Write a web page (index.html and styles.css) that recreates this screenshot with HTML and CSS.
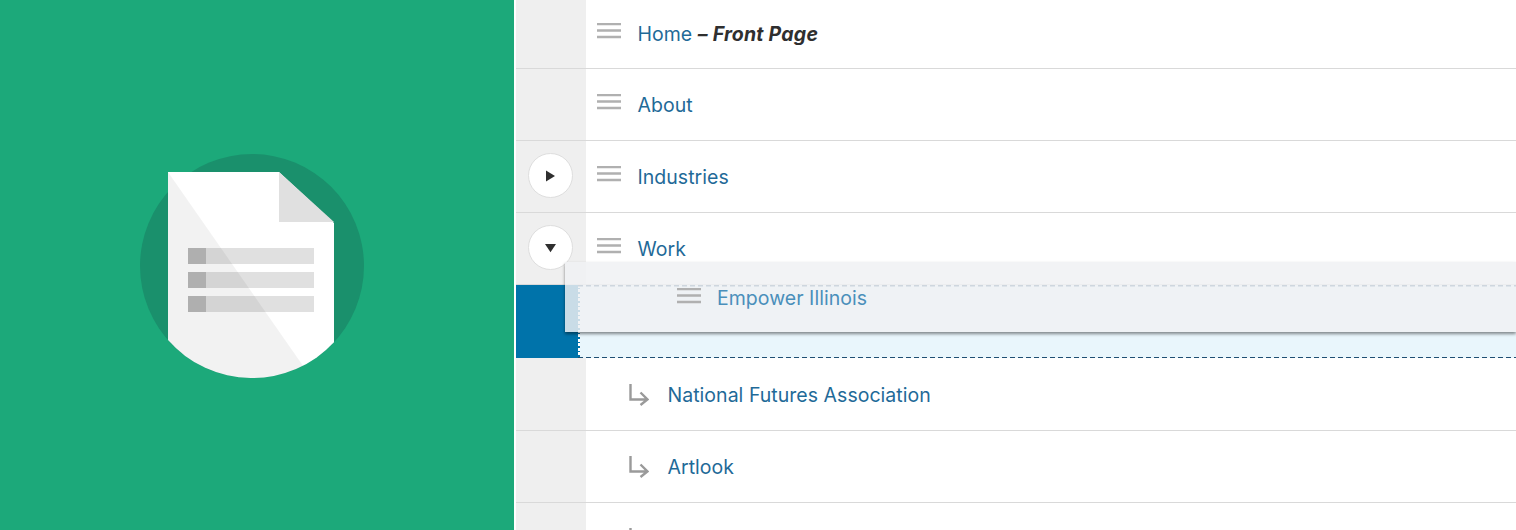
FILE: index.html
```html
<!DOCTYPE html>
<html lang="en">
<head>
<meta charset="utf-8">
<title>Pages</title>
<link rel="stylesheet" href="styles.css">
</head>
<body>
<div class="page">
  <aside class="hero">
    <svg class="hero-art" viewBox="0 0 514 530" aria-hidden="true">
      <circle cx="252" cy="266" r="112" fill="#1a906c"/>
      <path d="M168 172H279L334 223V342.300A112 112 0 0 1 168 340.100Z" fill="#fff"/>
      <path d="M279 172V222H334Z" fill="#e0e0e0"/>
      <path d="M188 248H314V264H188ZM188 272H314V288H188ZM188 296H314V312H188Z" fill="#e0e0e0"/>
      <path d="M188 248H206V264H188ZM188 272H206V288H188ZM188 296H206V312H188Z" fill="#b9b9b9"/>
      <path d="M168 172L303 365.700A112 112 0 0 1 168 340.100Z" fill="#000" fill-opacity=".05"/>
    </svg>
  </aside>
  <main class="list">
    <div class="row row-first">
      <div class="gutter"></div>
      <div class="cell">
        <svg class="handle" viewBox="0 0 24 16"><path d="M0 1H24M0 7.500H24M0 14H24"/></svg>
        <span class="title"><a class="link">Home</a> <em class="state">– Front Page</em></span>
      </div>
    </div>
    <div class="row">
      <div class="gutter"></div>
      <div class="cell">
        <svg class="handle" viewBox="0 0 24 16"><path d="M0 1H24M0 7.500H24M0 14H24"/></svg>
        <span class="title"><a class="link">About</a></span>
      </div>
    </div>
    <div class="row">
      <div class="gutter"><span class="toggle"><svg viewBox="0 0 10 12"><path d="M0.500 0.500L9.500 6L0.500 11.500Z"/></svg></span></div>
      <div class="cell">
        <svg class="handle" viewBox="0 0 24 16"><path d="M0 1H24M0 7.500H24M0 14H24"/></svg>
        <span class="title"><a class="link">Industries</a></span>
      </div>
    </div>
    <div class="row">
      <div class="gutter"><span class="toggle"><svg viewBox="0 0 12 10"><path d="M0 0.500H12L6 9.500Z"/></svg></span></div>
      <div class="cell">
        <svg class="handle" viewBox="0 0 24 16"><path d="M0 1H24M0 7.500H24M0 14H24"/></svg>
        <span class="title"><a class="link">Work</a></span>
      </div>
    </div>
    <div class="placeholder">
      <div class="placeholder-gutter"></div>
      <div class="placeholder-body"></div>
    </div>
    <div class="row row-child">
      <div class="gutter"></div>
      <div class="cell cell-child">
        <svg class="arrow" viewBox="0 0 20 22"><path d="M1.500 0V15.500H18M11.500 8.500L18.500 15.500L11.500 21"/></svg>
        <span class="title"><a class="link">National Futures Association</a></span>
      </div>
    </div>
    <div class="row">
      <div class="gutter"></div>
      <div class="cell cell-child">
        <svg class="arrow" viewBox="0 0 20 22"><path d="M1.500 0V15.500H18M11.500 8.500L18.500 15.500L11.500 21"/></svg>
        <span class="title"><a class="link">Artlook</a></span>
      </div>
    </div>
    <div class="row">
      <div class="gutter"></div>
      <div class="cell cell-child">
        <svg class="arrow" viewBox="0 0 20 22"><path d="M1.500 0V15.500H18M11.500 8.500L18.500 15.500L11.500 21"/></svg>
      </div>
    </div>
    <div class="drag-item">
      <svg class="handle handle-drag" viewBox="0 0 24 16"><path d="M0 1H24M0 7.500H24M0 14H24"/></svg>
      <span class="title title-drag">Empower Illinois</span>
    </div>
  </main>
</div>
</body>
</html>
```
FILE: styles.css
```css
* { box-sizing: border-box; }
html, body { margin: 0; height: 100%; overflow: hidden; background: #fff; }
body { font-family: Inter, "Liberation Sans", sans-serif; }

.page { display: flex; width: 1516px; height: 530px; overflow: hidden; }

.hero { flex: 0 0 514px; height: 530px; background: #1ca97a; }
.hero-art { display: block; width: 514px; height: 530px; }

.list { position: relative; flex: 1; margin-left: 2px; overflow: hidden; }

.row { display: flex; height: 72px; border-bottom: 1px solid #d9d9d9; }
.row-first { height: 69px; }
.row-child { height: 73px; }

.gutter { flex: 0 0 70px; display: flex; align-items: center; justify-content: center; padding-bottom: 2px; background: #efefef; }
.toggle { display: flex; align-items: center; justify-content: center; width: 45px; height: 45px; margin-right: 2px; border: 1px solid #dedede; border-radius: 50%; background: #fff; }
.toggle svg { display: block; width: 11px; height: 12px; fill: #2f2f2f; }

.cell { flex: 1; display: flex; align-items: center; padding-left: 11px; background: #fff; }
.cell-child { padding-left: 43px; }

.handle { flex: none; width: 24px; height: 16px; margin: -6px 17px 0 0; fill: none; stroke: #b0b0b0; stroke-width: 2.3; }
.arrow { flex: none; width: 20px; height: 22px; margin: 1px 19px 0 0; fill: none; stroke: #9a9a9a; stroke-width: 2.4; }

.title { margin: 0 0 0 -0.5px; font-size: 19.5px; letter-spacing: 0.03px; line-height: 24px; color: #2f2f2f; }
.row-child .title { margin-top: 2px; }
.link { color: #1f6a98; }
.state { font-weight: 700; letter-spacing: 0.25px; }

.placeholder { display: flex; height: 73px; }
.placeholder-gutter { flex: 0 0 62px; background: #0073aa; }
.placeholder-body {
  flex: 1;
  background-color: #e9f6fc;
  background-image:
    repeating-linear-gradient(90deg, #1f4f73 0 5px, transparent 5px 8px),
    repeating-linear-gradient(90deg, #1f4f73 0 5px, transparent 5px 8px),
    repeating-linear-gradient(180deg, #fff 0 3px, #0073aa 3px 4.5px);
  background-size: 100% 1.5px, 100% 1.5px, 2px 100%;
  background-position: left top, left bottom, left top;
  background-repeat: no-repeat;
}

.drag-item { position: absolute; left: 49px; top: 262px; right: 0; height: 70px; display: flex; align-items: center; padding-left: 112px; background: rgba(240, 241, 243, 0.84); box-shadow: 0 2px 3px rgba(0, 0, 0, 0.45); }
.handle-drag { margin: -2px 16.5px 0 0; }
.title-drag { margin-top: 2px; color: #4a8fbb; }
```
